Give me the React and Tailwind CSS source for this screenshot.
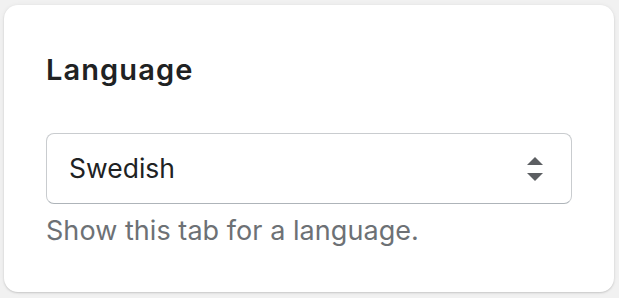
import React from "react";

const SelectArrows = () => (
	<svg viewBox="0 0 20 20" className="w-[40px] h-[40px] fill-[#5c5f62]">
		<path d="M10 16l-4-4h8l-4 4zm0-12l4 4H6l4-4z" strokeLinejoin="round" />
	</svg>
);

const App = () => {
	return (
		<div className="w-[619px] h-[298px] bg-[#f1f1f1] pt-[5px] pl-[4px] font-['Inter',sans-serif]">
			<div className="w-[610px] h-[287px] bg-white rounded-[14px] shadow-[0_0_5px_rgba(23,24,24,0.05),0_1px_2px_rgba(0,0,0,0.15)] px-[42px] pt-[48px]">
				<h2 className="text-[29px] leading-[33px] font-[600] tracking-[1.1px] text-[#202223]">
					Language
				</h2>
				<div className="mt-[47px] h-[71px] w-full rounded-[8px] border border-[#c9cccf] border-b-[#aeb4b9] flex items-center justify-between pl-[22px] pr-[16px]">
					<span className="text-[26.5px] text-[#202223]">Swedish</span>
					<SelectArrows />
				</div>
				<p className="mt-[11px] text-[27px] leading-[32px] tracking-[0.05px] text-[#6d7175]">
					Show this tab for a language.
				</p>
			</div>
		</div>
	);
};

export default App;
